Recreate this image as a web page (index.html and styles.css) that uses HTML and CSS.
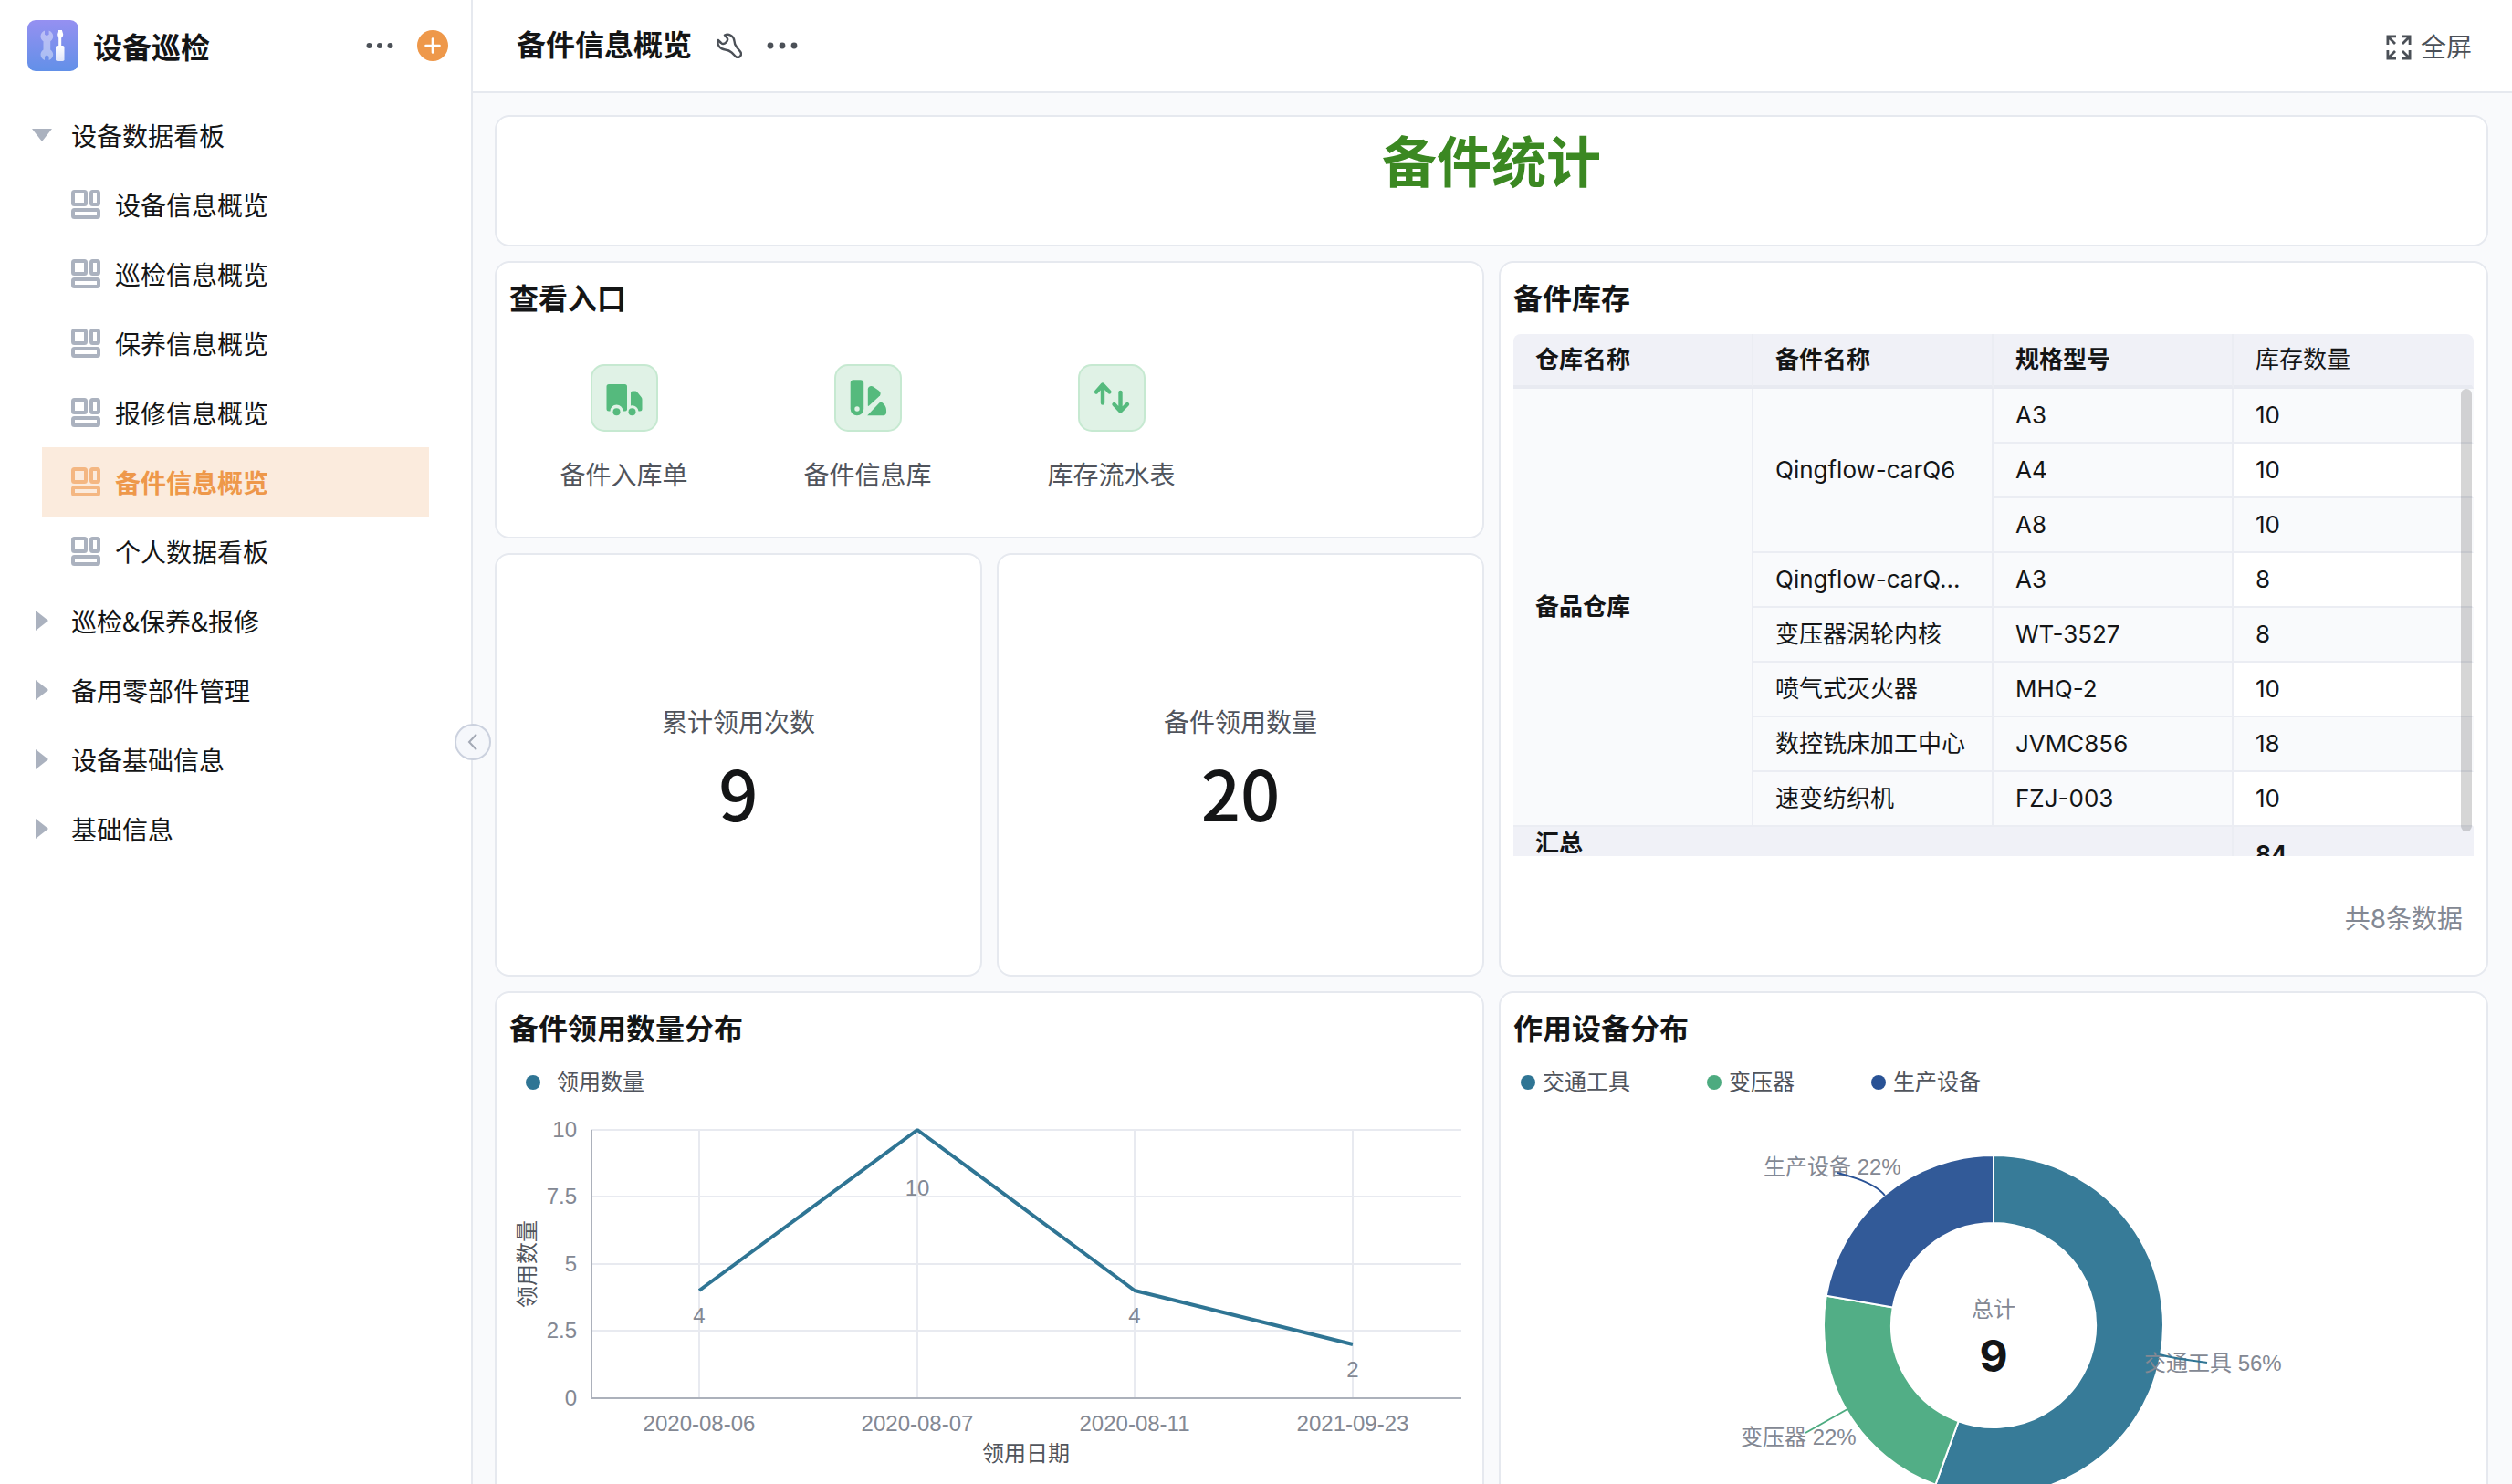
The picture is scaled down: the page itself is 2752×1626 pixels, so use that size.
FILE: index.html
```html
<!DOCTYPE html>
<html lang="zh-CN">
<head>
<meta charset="utf-8">
<meta name="viewport" content="width=device-width, initial-scale=1">
<title>备件信息概览 - 设备巡检</title>
<link rel="stylesheet" href="styles.css">
</head>
<body>
<svg class="sprite" aria-hidden="true">
  <symbol id="i-board" viewBox="0 0 34 34">
    <g fill="none" stroke="currentColor" stroke-width="4">
      <rect x="3" y="3" width="14" height="14" rx="1.5"/>
      <rect x="23" y="3" width="8" height="14" rx="1.5"/>
      <rect x="3" y="23" width="28" height="8" rx="1.5"/>
    </g>
  </symbol>
  <symbol id="i-dots" viewBox="0 0 34 8">
    <g fill="currentColor"><circle cx="4" cy="4" r="3.4"/><circle cx="17" cy="4" r="3.4"/><circle cx="30" cy="4" r="3.4"/></g>
  </symbol>
</svg>
<div class="app">
  <aside class="sidebar">
    <div class="brand">
      <svg class="brand-logo" viewBox="0 0 56 56" aria-hidden="true">
        <defs>
          <linearGradient id="lg" x1="0" y1="0" x2="0" y2="1"><stop offset="0" stop-color="#9590f1"/><stop offset="1" stop-color="#6290e8"/></linearGradient>
          <linearGradient id="hg" x1="0" y1="0" x2="0" y2="1"><stop offset="0" stop-color="#fff"/><stop offset="1" stop-color="#dfe5fa"/></linearGradient>
        </defs>
        <rect width="56" height="56" rx="9" fill="url(#lg)"/>
        <path fill="#fff" fill-opacity=".42" d="M19 11.5v4.2l2.3 1.6 2.3-1.6v-4.2c2.800 1 4.600 3.400 4.600 6.300 0 2.400-1.400 4.300-3 5.400v9.200c1.700 1.200 3 3 3 5.300 0 2.900-1.800 5.300-4.600 6.400V40l-2.300-1.800L19 40v4.100c-2.700-1.100-4.500-3.500-4.500-6.400 0-2.300 1.300-4.100 3-5.300v-9.200c-1.700-1.100-3-3-3-5.400 0-2.900 1.800-5.300 4.500-6.300z"/>
        <path fill="#fff" d="M33.500 11h4.400l1.300 4.500c0 2-.6 3.200-2 4V28h-3v-8.500c-1.400-.8-2-2-2-4z"/>
        <rect x="31" y="28" width="9.500" height="17" rx="1.800" fill="url(#hg)"/>
      </svg>
      <h1 class="brand-name">设备巡检</h1>
      <button class="icon-btn" type="button" aria-label="更多"><svg class="dots-sm"><use href="#i-dots"/></svg></button>
      <button class="icon-btn add-btn" type="button" aria-label="新建">
        <svg viewBox="0 0 34 34" width="34" height="34"><circle cx="17" cy="17" r="17" fill="#ee984a"/><path d="M17 9.500v15M9.500 17h15" stroke="#fff" stroke-width="2.600" stroke-linecap="round"/></svg>
      </button>
    </div>
    <nav class="menu" aria-label="应用菜单">
      <button class="group open" type="button" aria-expanded="true"><svg class="caret" viewBox="0 0 22 22"><path d="M0 4h22L11 18z" fill="currentColor"/></svg>设备数据看板</button>
      <a class="item" href="#"><svg class="board"><use href="#i-board"/></svg>设备信息概览</a>
      <a class="item" href="#"><svg class="board"><use href="#i-board"/></svg>巡检信息概览</a>
      <a class="item" href="#"><svg class="board"><use href="#i-board"/></svg>保养信息概览</a>
      <a class="item" href="#"><svg class="board"><use href="#i-board"/></svg>报修信息概览</a>
      <a class="item active" href="#" aria-current="page"><svg class="board"><use href="#i-board"/></svg>备件信息概览</a>
      <a class="item" href="#"><svg class="board"><use href="#i-board"/></svg>个人数据看板</a>
      <button class="group" type="button" aria-expanded="false"><svg class="caret" viewBox="0 0 22 22"><path d="M4 0v22L18 11z" fill="currentColor"/></svg>巡检&amp;保养&amp;报修</button>
      <button class="group" type="button" aria-expanded="false"><svg class="caret" viewBox="0 0 22 22"><path d="M4 0v22L18 11z" fill="currentColor"/></svg>备用零部件管理</button>
      <button class="group" type="button" aria-expanded="false"><svg class="caret" viewBox="0 0 22 22"><path d="M4 0v22L18 11z" fill="currentColor"/></svg>设备基础信息</button>
      <button class="group" type="button" aria-expanded="false"><svg class="caret" viewBox="0 0 22 22"><path d="M4 0v22L18 11z" fill="currentColor"/></svg>基础信息</button>
    </nav>
    <button class="collapse" type="button" aria-label="收起侧栏"><svg viewBox="0 0 12 20" width="12" height="20"><path d="M10 1.500L2 10l8 8.500" fill="none" stroke="#a3a9b5" stroke-width="2"/></svg></button>
  </aside>

  <main class="main">
    <header class="topbar">
      <h2 class="page-title">备件信息概览</h2>
      <button class="icon-btn" type="button" aria-label="设置">
        <svg viewBox="0 0 28 28" width="28" height="28"><path fill="none" stroke="#4b5057" stroke-width="2.400" stroke-linejoin="round" d="M9 2.500C13 .5 19 3 19.500 9c0 3 1 5 3 7.300l3.500 4.200c2.700 3.500-1.300 8.300-5 5.500l-4.300-4.300c-2.200-2.100-3.700-2.900-7.200-3.200C4 18 0 13 1.800 8L5 11c1.500 1.500 3.700 1.200 5.500-.6 1.900-1.900 2.200-3.500 1-5z"/></svg>
      </button>
      <button class="icon-btn" type="button" aria-label="更多"><svg class="dots-lg"><use href="#i-dots"/></svg></button>
      <button class="fullscreen" type="button">
        <svg viewBox="0 0 28 28" width="28" height="28"><path fill="none" stroke="#4b5057" stroke-width="2.800" d="M1.900 11V1.900H11M2 2l8 8M17 1.900h9.100V11M26 2l-8 8M1.900 17v9.100H11M2 26l8-8M26.100 17v9.100H17M26 26l-8-8"/></svg>
        全屏
      </button>
    </header>

    <div class="board-scroll">
      <div class="grid">
        <section class="card banner"><h2>备件统计</h2></section>

        <section class="card entries">
          <h3 class="card-title">查看入口</h3>
          <div class="entry-row">
            <a class="entry" href="#">
              <svg class="tile" viewBox="0 0 74 74"><rect x="1" y="1" width="72" height="72" rx="14"/><g fill="#55ba7d"><path d="M20 22h17.500a2.500 2.500 0 0 1 2.500 2.500v25.500a2.500 2.500 0 0 1-2.500 1.500H35.500a7 7 0 0 0-14 0H20a2.500 2.500 0 0 1-2.500-2.500V24.500A2.500 2.500 0 0 1 20 22z"/><path d="M44 31.500a2 2 0 0 1 2-2h2.500c1.200 0 2 .4 2.700 1.200l4.300 5.300c.7.900 1 1.700 1 2.800V49a2.500 2.500 0 0 1-2.500 2.500h-1.500a7 7 0 0 0-7-6.200l-1.500.1z"/><circle cx="28.500" cy="52.300" r="4"/><circle cx="45.500" cy="52.300" r="4"/></g></svg>
              备件入库单</a>
            <a class="entry" href="#">
              <svg class="tile" viewBox="0 0 74 74"><rect x="1" y="1" width="72" height="72" rx="14"/><g fill="#55ba7d"><path fill-rule="evenodd" d="M21 17.300h7.700a3.500 3.500 0 0 1 3.500 3.500v28.300a7.200 7.200 0 0 1-14.500 0V20.800a3.500 3.500 0 0 1 3.300-3.500zM25 46.300a2.700 2.700 0 1 0 0 5.400 2.700 2.700 0 0 0 0-5.400z"/><path d="M36.800 27.500c0-3 3.500-4.500 6-2.800l6 4.300c2 1.500 2.300 3.500 1.200 5.600L37.500 46l-.7-.5z"/><path d="M49.500 42.300c1-.8 2.500-.8 3.500.1 2.800 2.300 4.500 5.300 4 10.900-.2 1.900-1.500 3-3.300 3H36.200z"/></g></svg>
              备件信息库</a>
            <a class="entry" href="#">
              <svg class="tile" viewBox="0 0 74 74"><rect x="1" y="1" width="72" height="72" rx="14"/><path d="M27 42.500V23M20 30.500l7-8 7.500 8M46.500 31v20M39.500 44l7 7.500 7.500-7.500" fill="none" stroke="#55ba7d" stroke-width="4.400" stroke-linecap="round" stroke-linejoin="round"/></svg>
              库存流水表</a>
          </div>
        </section>

        <section class="card stock">
          <h3 class="card-title">备件库存</h3>
          <div class="table-wrap">
            <table>
              <thead><tr><th scope="col">仓库名称</th><th scope="col">备件名称</th><th scope="col">规格型号</th><th scope="col" class="metric">库存数量</th></tr></thead>
              <tbody>
                <tr><th scope="row" rowspan="8">备品仓库</th><td class="dim" rowspan="3">Qingflow-carQ6</td><td class="dim">A3</td><td>10</td></tr>
                <tr><td class="dim">A4</td><td>10</td></tr>
                <tr><td class="dim">A8</td><td>10</td></tr>
                <tr><td class="dim">Qingflow-carQ...</td><td class="dim">A3</td><td>8</td></tr>
                <tr><td class="dim">变压器涡轮内核</td><td class="dim">WT-3527</td><td>8</td></tr>
                <tr><td class="dim">喷气式灭火器</td><td class="dim">MHQ-2</td><td>10</td></tr>
                <tr><td class="dim">数控铣床加工中心</td><td class="dim">JVMC856</td><td>18</td></tr>
                <tr><td class="dim">速变纺织机</td><td class="dim">FZJ-003</td><td>10</td></tr>
              </tbody>
              <tfoot><tr><th scope="row" colspan="3">汇总</th><td>84</td></tr></tfoot>
            </table>
            <span class="thumb"></span>
          </div>
          <p class="total">共8条数据</p>
        </section>

        <section class="card stat"><p class="stat-label">累计领用次数</p><p class="stat-value">9</p></section>
        <section class="card stat"><p class="stat-label">备件领用数量</p><p class="stat-value">20</p></section>

        <section class="card chart">
          <h3 class="card-title">备件领用数量分布</h3>
          <ul class="legend legend-line"><li><i class="dot teal"></i>领用数量</li></ul>
          <svg class="plot" viewBox="0 0 1080 420" role="img" aria-label="领用数量折线图">
            <path class="gridline" d="M104 32h953M104 105h953M104 179h953M104 252h953M222 32v294M461 32v294M699 32v294M938 32v294"/>
            <path class="axis" d="M104 32v294h953"/>
            <polyline class="series" points="222,208 461,32 699,208 938,267"/>
            <g class="tick end"><text x="88" y="40">10</text><text x="88" y="113">7.5</text><text x="88" y="187">5</text><text x="88" y="260">2.5</text><text x="88" y="334">0</text></g>
            <g class="tick"><text x="222" y="362">2020-08-06</text><text x="461" y="362">2020-08-07</text><text x="699" y="362">2020-08-11</text><text x="938" y="362">2021-09-23</text>
            <text x="222" y="244">4</text><text x="461" y="104">10</text><text x="699" y="244">4</text><text x="938" y="303">2</text></g>
            <g class="axis-name"><text x="580" y="395">领用日期</text><text transform="translate(42 179) rotate(-90)">领用数量</text></g>
          </svg>
        </section>

        <section class="card chart">
          <h3 class="card-title">作用设备分布</h3>
          <ul class="legend"><li><i class="dot teal"></i>交通工具</li><li><i class="dot green"></i>变压器</li><li><i class="dot blue"></i>生产设备</li></ul>
          <svg class="plot" viewBox="0 0 1080 460" role="img" aria-label="作用设备环形图">
            <g stroke="#fff" stroke-width="2" stroke-linejoin="round">
              <path fill="#377b98" d="M540 60A186 186 0 1 1 476.400 420.800L501.700 351.200A112 112 0 1 0 540 134z"/>
              <path fill="#52ae86" d="M476.400 420.800A186 186 0 0 1 356.800 213.700L429.700 226.600A112 112 0 0 0 501.700 351.200z"/>
              <path fill="#325a98" d="M356.800 213.700A186 186 0 0 1 540 60V134A112 112 0 0 0 429.700 226.600z"/>
            </g>
            <g class="pie-label"><text x="288" y="81">生产设备 22%</text><text x="263" y="377">变压器 22%</text><text x="705" y="296">交通工具 56%</text></g>
            <g fill="none" stroke-width="2"><path stroke="#295295" d="M369 79c20 5 42 12 52 25"/><path stroke="#4dab80" d="M334 364l46-26"/><path stroke="#2f7594" d="M722 278c15 5 35 6 52 9"/></g>
            <g class="pie-center"><text x="540" y="237">总计</text><text class="pie-total" x="540" y="297">9</text></g>
          </svg>
        </section>
      </div>
    </div>
  </main>
</div>
</body>
</html>
```
FILE: styles.css
```css
:root {
  --ink: #141516;
  --ink-2: #50545c;
  --ink-3: #838893;
  --line: #e6e9ef;
  --canvas: #f9fafc;
  --orange: #ee984a;
  --teal: #2f7594;
}

* { box-sizing: border-box; }

body {
  margin: 0;
  color: var(--ink);
  background: var(--canvas);
  font: 28px/40px Inter, "Noto Sans CJK SC", sans-serif;
}

h1, h2, h3, p, ul { margin: 0; padding: 0; }
h1, h2, h3 { font-weight: 700; }
p { font-weight: 400; }
ul { list-style: none; }
a { color: inherit; text-decoration: none; }
button { padding: 0; border: 0; background: none; color: inherit; font: inherit; cursor: pointer; }
svg { display: block; }
.sprite { position: absolute; width: 0; height: 0; }

.app { display: flex; height: 100vh; overflow: hidden; }

/* Sidebar */
.sidebar {
  position: relative;
  flex: 0 0 518px;
  border-right: 2px solid var(--line);
  background: #fff;
  font-family: "Noto Sans CJK SC", sans-serif;
}
.brand { display: flex; align-items: center; height: 100px; padding: 0 25px 0 30px; }
.brand-logo { width: 56px; height: 56px; margin-right: 16px; }
.brand-name { flex: 1; font-size: 32px; }
.icon-btn { display: flex; align-items: center; color: #4b5057; }
.dots-sm { width: 30px; height: 8px; }
.dots-lg { width: 34px; height: 8px; }
.add-btn { margin-left: 26px; }

.menu { display: flex; flex-direction: column; padding-top: 10px; }
.group, .item { display: flex; align-items: center; height: 76px; text-align: left; }
.group { padding-left: 35px; }
.caret { width: 22px; height: 22px; margin-right: 21px; color: #abb2bf; }
.item { margin: 0 46px; padding-left: 31px; }
.board { width: 34px; height: 34px; margin-right: 15px; color: #abb2bf; }
.item.active { color: var(--orange); background: #fbebdd; font-weight: 700; }
.item.active .board { color: #f4b782; }

.collapse {
  position: absolute;
  top: 50%;
  right: -22px;
  z-index: 1;
  display: flex;
  align-items: center;
  justify-content: center;
  width: 40px;
  height: 40px;
  margin-top: -20px;
  border: 2px solid #cbd1de;
  border-radius: 50%;
  background: #f5f7fb;
}

/* Main column */
.main { display: flex; flex: 1; flex-direction: column; min-width: 0; }
.topbar {
  display: flex;
  flex: none;
  align-items: center;
  gap: 27px;
  height: 102px;
  padding: 0 44px 0 48px;
  border-bottom: 2px solid var(--line);
  background: #fff;
}
.page-title { font-size: 32px; }
.fullscreen { display: flex; align-items: center; gap: 10px; margin-left: auto; padding-top: 4px; color: #4b5057; }

.board-scroll { flex: 1; min-height: 0; padding: 24px 26px 24px 24px; overflow: auto; scrollbar-width: none; }
.grid {
  display: grid;
  grid-template-columns: minmax(0, 534fr) minmax(0, 534fr) minmax(0, 1084fr);
  grid-template-rows: 144px 304px 464px auto;
  gap: 16px;
}
.card {
  min-width: 0;
  border: 2px solid var(--line);
  border-radius: 16px;
  background: #fff;
}
.card-title { padding: 17px 14px 0; font-size: 32px; line-height: 46px; }

.banner { grid-column: 1 / -1; text-align: center; }
.banner h2 { padding-top: 8px; color: #3b8822; font-size: 60px; line-height: 84px; }

.entries { grid-column: 1 / 3; }
.entry-row { display: grid; grid-template-columns: repeat(4, 1fr); padding: 48px 6px 0; }
.entry { display: flex; flex-direction: column; align-items: center; gap: 28px; color: var(--ink-2); }
.tile { width: 74px; height: 74px; }
.tile > rect { fill: #e0f2e6; stroke: #c6e9d1; stroke-width: 2; }

.stock { grid-column: 3; grid-row: 2 / 4; }
.stat { display: flex; flex-direction: column; align-items: center; padding-top: 164px; }
.stat-label { color: var(--ink-2); }
.stat-value { margin-top: 11px; font: 500 76px/88px "Noto Sans CJK SC", sans-serif; }

/* Stock table */
.table-wrap {
  position: relative;
  height: 572px;
  margin: 15px 14px 0;
  border-radius: 8px 8px 0 0;
  overflow: hidden;
}
table { width: 100%; table-layout: fixed; border-spacing: 0; border-collapse: separate; font-size: 26px; line-height: 36px; }
th, td {
  height: 60px;
  padding: 0 0 0 24px;
  border-right: 2px solid #ebedf3;
  border-bottom: 2px solid #ebedf3;
  text-align: left;
  font-weight: 400;
  white-space: nowrap;
}
th { font-weight: 700; }
thead th { border-bottom: 4px solid #e8eaf1; background: #f0f1f7; }
thead .metric { font-weight: 400; }
tr > :last-child { border-right-color: transparent; }
.dim, tbody th { background: var(--canvas); }
tbody tr:nth-child(odd) td { background: var(--canvas); }
tfoot th, tfoot td { border-bottom: 0; background: #f0f1f7; }
tfoot th { vertical-align: top; }
tfoot td { font-weight: 700; }
.thumb { position: absolute; top: 60px; right: 2px; width: 12px; height: 485px; border-radius: 6px; background: rgba(0, 0, 0, .16); }
.total { padding: 49px 26px 0; color: var(--ink-3); text-align: right; }

/* Charts */
.chart { min-height: 784px; }
.chart:nth-last-child(2) { grid-column: 1 / 3; }
.legend { display: flex; gap: 84px; padding: 15px 22px 0; color: var(--ink-2); font-size: 24px; }
.legend li { display: flex; align-items: center; gap: 8px; }
.legend-line { padding-left: 32px; }
.legend-line li { gap: 18px; }
.dot { width: 16px; height: 16px; border-radius: 50%; }
.teal { background: var(--teal); }
.green { background: #4dab80; }
.blue { background: #295295; }
.plot { width: 100%; font: 24px "Liberation Sans", "Noto Sans CJK SC", sans-serif; }
.gridline { fill: none; stroke: #e8eaf0; stroke-width: 2; }
.axis { fill: none; stroke: #acb1bb; stroke-width: 2; }
.series { fill: none; stroke: var(--teal); stroke-width: 4; stroke-linejoin: bevel; }
.tick { fill: var(--ink-3); text-anchor: middle; }
.tick.end { text-anchor: end; }
.axis-name { fill: var(--ink-2); text-anchor: middle; }
.pie-label { fill: var(--ink-3); }
.pie-center { fill: var(--ink-3); text-anchor: middle; }
.pie-total { fill: var(--ink); font: 700 48px Inter, sans-serif; }
```
